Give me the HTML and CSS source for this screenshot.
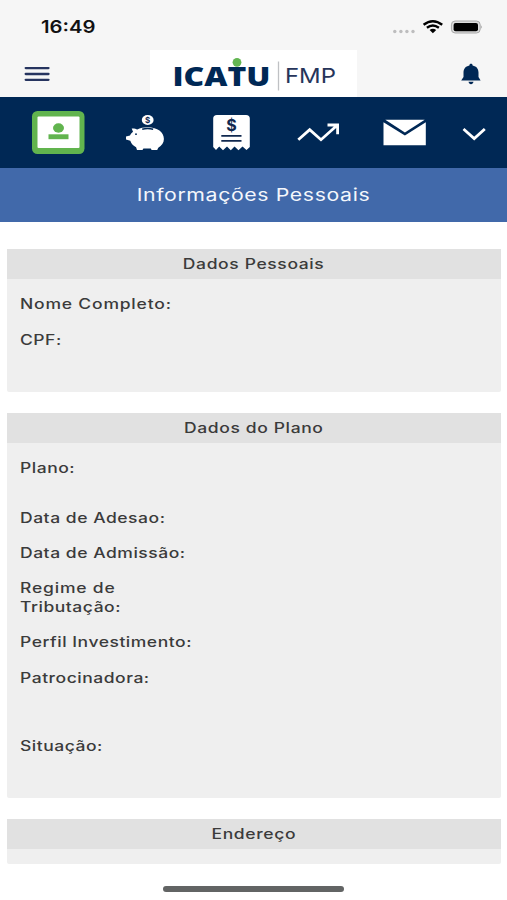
FILE: index.html
```html
<!DOCTYPE html>
<html lang="pt-BR">

<head>
	<meta charset="UTF-8">
	<meta name="viewport" content="width=device-width, initial-scale=1.0">
	<title>Icatu FMP</title>
	<link rel="stylesheet" href="styles.css">
</head>

<body>
	<header>
		<div class="status-bar">
			<svg width="60" height="22" viewBox="0 0 60 22">
				<text class="clock" x="0" y="15" textLength="54.5" lengthAdjust="spacingAndGlyphs">16:49</text>
			</svg>
			<svg width="92" height="18" viewBox="0 0 92 18">
				<g fill="#bdbdbe">
					<circle cx="3.8" cy="13.5" r="1.7" />
					<circle cx="9.9" cy="13.5" r="1.7" />
					<circle cx="15.9" cy="13.5" r="1.7" />
					<circle cx="22" cy="13.5" r="1.7" />
				</g>
				<g fill="none" stroke="#000" stroke-width="2.4">
					<path d="M32.6 6.8Q41.8 -.4 51.2 6.8" />
					<path d="M35.9 9.8Q41.8 5.3 47.9 9.8" />
				</g>
				<path d="M38.6 11.9Q41.8 9.7 45.2 11.9L41.9 15.3Z" fill="#000" />
				<rect x="60.4" y="3" width="28.8" height="12" rx="3.8" fill="#dcdcdc" stroke="#a8a8a8" />
				<rect x="62.6" y="4.9" width="24.4" height="8.3" rx="2" fill="#000" />
				<path d="M90.2 7.2Q92 9 90.2 10.8Z" fill="#a0a0a0" />
			</svg>
		</div>
		<div class="top-bar">
			<svg class="menu" width="26" height="16" viewBox="0 0 26 16">
				<path d="M1.7 2.1H24.5M1.7 8H24.5M1.7 13.8H24.5" stroke="#26345f" stroke-width="2.3" stroke-linecap="round" />
			</svg>
			<svg class="logo" width="207" height="47" viewBox="0 0 207 47">
				<rect width="207" height="47" fill="#fff" />
				<text class="icatu" x="22.5" y="35.5" textLength="98" lengthAdjust="spacingAndGlyphs">ICATU</text>
				<circle cx="87" cy="12.3" r="4.4" fill="#63b652" />
				<path d="M128.5 11.5V40.5" stroke="#bfc1c4" stroke-width="1.3" />
				<text class="fmp" x="135" y="33.3" textLength="51" lengthAdjust="spacingAndGlyphs">FMP</text>
			</svg>
			<svg class="bell" width="22" height="22" viewBox="0 0 22 22">
				<path d="M11 .8C12 .8 12.6 1.4 12.6 2.4C16.6 3.2 18.5 5.8 18.5 9.4V14L20.6 17.6H1.2L3.5 14V9.4C3.5 5.8 5.4 3.2 9.4 2.4C9.4 1.4 10 .8 11 .8ZM8.5 18.8H13.5C13.2 20.2 12.3 21.2 11 21.2S8.8 20.2 8.5 18.8Z" fill="#002855" />
			</svg>
		</div>
	</header>

	<nav>
		<svg width="507" height="71" viewBox="0 0 507 71">
			<!-- profile -->
			<rect x="32" y="14" width="52.5" height="43" rx="5.5" fill="#61b44e" />
			<rect x="37.5" y="19.5" width="42" height="31.5" rx="1" fill="#fff" />
			<ellipse cx="58.5" cy="31" rx="5.5" ry="4.7" fill="#61b44e" />
			<rect x="48.5" y="37.3" width="20" height="4.9" fill="#61b44e" />
			<!-- piggy bank -->
			<path d="M126 42.5V39.6L130 38.6C130.7 37.1 131.5 36 133 34.8L131.7 31.4C134.3 31.3 136.1 31.7 137.3 32.5C140.2 31 143.6 30.2 147.8 30.2C157.5 30.2 163.9 35.2 163.9 42C163.9 46 161.7 48.7 158.3 50.8L157.2 52.9H151.6L150.8 51.4H143.4L142.5 52.9H137L136.1 50.2C133.4 48.8 131.4 47 130.3 43.8Z" fill="#fff" />
			<path d="M142.2 32.2Q147.8 30.8 153.2 32.3" fill="none" stroke="#002855" stroke-width="1.6" />
			<circle cx="136" cy="37.2" r=".9" fill="#002855" />
			<ellipse cx="147.7" cy="23" rx="5.9" ry="5" fill="#fff" />
			<text class="coin" x="147.7" y="26">$</text>
			<!-- statement -->
			<path d="M217 18H246Q249.8 18 249.8 21.5V50L246.5 53L242.5 49.5L238.5 53.2L234.5 49.5L230.8 53.2L227 49.5L223 53.2L219.2 49.5L216 53L213.2 50V21.5Q213.2 18 217 18Z" fill="#fff" />
			<text class="cash" x="231.4" y="34.3">$</text>
			<path d="M221.3 38.8H241.5M221.3 43.8H241.5" stroke="#10284f" stroke-width="1.8" />
			<!-- chart -->
			<path d="M298.3 42.8L309.7 32.6L321 42.7L337.2 28.3M327.5 28H337.6V37.2" fill="none" stroke="#fff" stroke-width="2.8" />
			<!-- mail -->
			<path d="M385.3 22.8H424.7L404.9 35.4Z" fill="#fff" />
			<path d="M383.5 25.2L404.9 38.5L425.8 25.2V48.2H383.5Z" fill="#fff" />
			<!-- more -->
			<path d="M463.5 32L474.2 41.5L484.8 32" fill="none" stroke="#fff" stroke-width="2.8" />
		</svg>
	</nav>

	<h1><span>Informações Pessoais</span></h1>

	<main>
		<section class="personal">
			<h2><span>Dados Pessoais</span></h2>
			<ul>
				<li class="wide">Nome Completo:</li>
				<li>CPF:</li>
			</ul>
		</section>

		<section class="plan">
			<h2><span>Dados do Plano</span></h2>
			<ul>
				<li class="plan-name">Plano:</li>
				<li>Data de Adesao:</li>
				<li>Data de Admissão:</li>
				<li><span class="wide">Regime de</span><br>Tributação:</li>
				<li>Perfil Investimento:</li>
				<li class="sponsor">Patrocinadora:</li>
				<li>Situação:</li>
			</ul>
		</section>

		<section class="address">
			<h2><span>Endereço</span></h2>
		</section>
	</main>

	<div class="home-indicator"></div>
</body>

</html>
```
FILE: styles.css
```css
* {
	box-sizing: border-box;
}

body,
h1,
h2,
ul {
	margin: 0;
	padding: 0;
	font-weight: normal;
}

body {
	height: 900px;
	overflow: hidden;
	background: #fff;
	color: #3b3b3b;
	font-family: Inter, "Liberation Sans", sans-serif;
}

svg {
	display: block;
}

header {
	height: 97px;
	background: #f6f6f6;
}

.status-bar {
	display: flex;
	justify-content: space-between;
	height: 50px;
	padding: 18px 24px 0 41px;
}

.clock {
	font-size: 17px;
	font-weight: 600;
	fill: #111;
}

.top-bar {
	display: flex;
	justify-content: space-between;
	align-items: center;
	height: 47px;
	padding: 0 25px 0 24px;
}

.logo {
	margin-right: 3px;
}

.icatu {
	font-family: "Open Sans", sans-serif;
	font-size: 27px;
	font-weight: 800;
	fill: #002855;
}

.fmp {
	font-size: 20px;
	fill: #26345a;
}

nav {
	height: 71px;
	background: #002855;
}

.coin,
.cash {
	font-size: 8px;
	font-weight: 700;
	text-anchor: middle;
	fill: #10284f;
}

.cash {
	font-size: 16px;
}

h1 {
	height: 54px;
	background: #4169aa;
	color: #f4f7fc;
	font-size: 17px;
	line-height: 55px;
	text-align: center;
}

h1 span,
h2 span {
	display: inline-block;
	letter-spacing: 0.5px;
	transform: scaleX(1.25);
}

main {
	padding: 27px 6px 0 7px;
}

section {
	margin-bottom: 21px;
	border-radius: 2px;
	background: #efefef;
}

h2 {
	height: 30px;
	background: #e1e1e1;
	font-size: 14px;
	font-weight: 500;
	line-height: 29px;
	text-align: center;
}

ul {
	padding: 15.4px 13px;
	list-style: none;
}

/* extended lettering */
li {
	width: 200px;
	margin-bottom: 16px;
	font-size: 14px;
	font-weight: 500;
	line-height: 19.2px;
	letter-spacing: 0.42px;
	transform: scaleX(1.25);
	transform-origin: left;
}

.wide {
	letter-spacing: 0.65px;
}

.personal {
	height: 143px;
}

.plan {
	height: 385px;
}

.plan-name {
	margin-bottom: 30px;
}

.sponsor {
	margin-bottom: 49px;
}

.address {
	height: 45px;
	margin-bottom: 0;
}

.home-indicator {
	width: 181px;
	height: 6px;
	margin: 22px auto 0 163px;
	border-radius: 3px;
	background: #626464;
}
```
